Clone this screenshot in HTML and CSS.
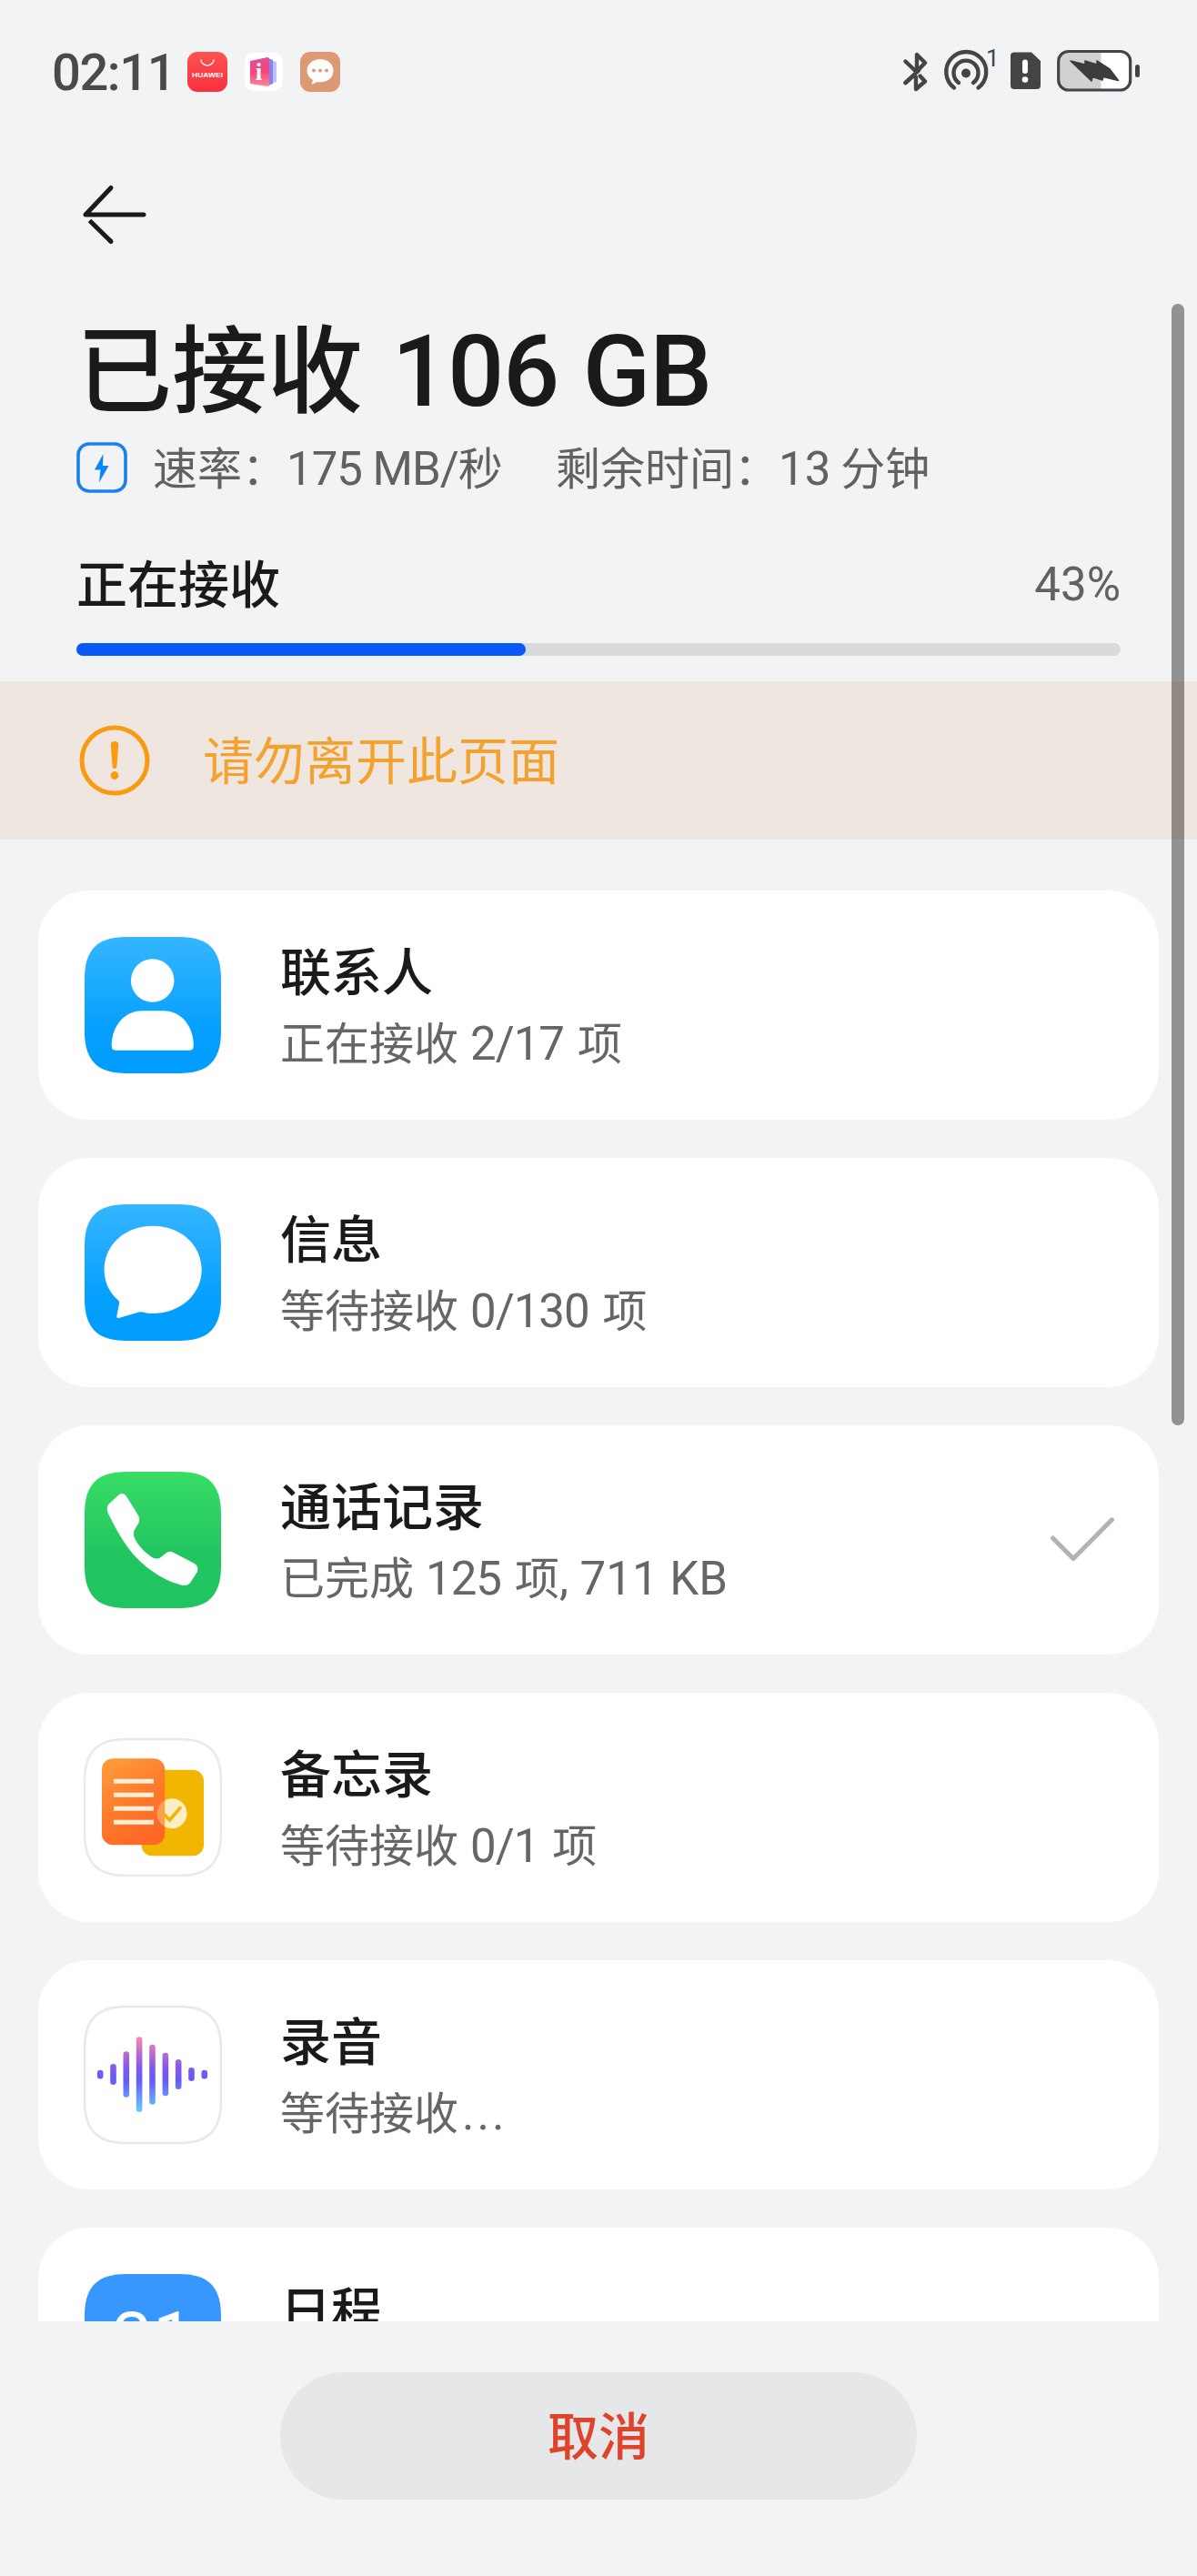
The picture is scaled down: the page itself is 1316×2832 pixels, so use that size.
FILE: index.html
```html
<!DOCTYPE html>
<html lang="zh-CN">
<head>
<meta charset="utf-8">
<title>已接收 106 GB</title>
<link rel="stylesheet" href="styles.css">
</head>
<body>
<svg class="defs" width="0" height="0" aria-hidden="true">
  <defs>
    <linearGradient id="blue" x1="0" y1="0" x2="0" y2="1"><stop offset="0" stop-color="#35b6ff"/><stop offset=".7" stop-color="#049fff"/><stop offset="1" stop-color="#009cff"/></linearGradient>
    <linearGradient id="green" x1="0" y1="0" x2="0" y2="1"><stop offset="0" stop-color="#38dc66"/><stop offset=".6" stop-color="#22c661"/><stop offset="1" stop-color="#20c460"/></linearGradient>
    <linearGradient id="orange" x1="0" y1="0" x2=".5" y2="1"><stop offset="0" stop-color="#ff9e3c"/><stop offset=".6" stop-color="#ff7a2c"/><stop offset="1" stop-color="#ff6826"/></linearGradient>
    <linearGradient id="wave" gradientUnits="userSpaceOnUse" x1="0" y1="33" x2="0" y2="116"><stop offset="0" stop-color="#f88aa8"/><stop offset=".4" stop-color="#8458ec"/><stop offset=".58" stop-color="#6659f8"/><stop offset="1" stop-color="#68cdfb"/></linearGradient>
    <linearGradient id="pink" x1="0" y1="0" x2="0" y2="1"><stop offset="0" stop-color="#e2509a"/><stop offset=".5" stop-color="#f8447c"/><stop offset="1" stop-color="#fb8a98"/></linearGradient>
    <linearGradient id="red" x1="0" y1="0" x2="0" y2="1"><stop offset="0" stop-color="#ff5250"/><stop offset="1" stop-color="#f9303e"/></linearGradient>
    <path id="tile" d="M46 0H104C136 0 150 14 150 46V104C150 136 136 150 104 150H46C14 150 0 136 0 104V46C0 14 14 0 46 0Z"/>
  </defs>
</svg>
<div class="screen">
  <header class="status">
    <span class="clock">02:11</span>
    <div class="notices">
      <svg width="44" height="44" viewBox="0 0 44 44"><rect width="44" height="44" rx="11" fill="url(#red)"/><path d="M15 8.5a7 6.5 0 0 0 14 0" fill="none" stroke="#fff" stroke-width="1.4"/><text x="22" y="28" text-anchor="middle" textLength="34" lengthAdjust="spacingAndGlyphs" class="brand">HUAWEI</text></svg>
      <svg width="42" height="42" viewBox="0 0 42 42"><rect width="42" height="42" rx="10" fill="#fff"/><path d="M26 7l9 3v22l-9 3z" fill="#c3bff8"/><path d="M26 6l5 2v26l-5 2z" fill="#8a80ee"/><path d="M6 9L25 5q2 0 2 2v28q0 2-2 2L6 34z" fill="url(#pink)"/><text x="15.5" y="30" text-anchor="middle" class="info">i</text></svg>
      <svg width="44" height="44" viewBox="0 0 44 44"><rect width="44" height="44" rx="11" fill="#dc9a74"/><path d="M22 8C14 8 7.500 13.500 7.500 20.500C7.500 25 10 28.500 14 31L12.500 36L19 33C30 34.500 36.500 28.500 36.500 20.500C36.500 13.500 30 8 22 8Z" fill="#fff"/><g fill="#dc9a74"><circle cx="15" cy="20.500" r="2"/><circle cx="22" cy="20.500" r="2"/><circle cx="29" cy="20.500" r="2"/></g></svg>
    </div>
    <svg class="signals" width="264" height="58" viewBox="992 48 264 58">
      <g fill="none" stroke="#444" stroke-width="4.400" stroke-linecap="round" stroke-linejoin="round">
        <path d="M995.500 67.500L1007.500 79L1017 69L1008 60V77M995.500 91L1005.500 82"/>
        <path d="M995.500 91L1010 77.500"/>
        <path d="M1007 85V98L1017 89.500L1011.500 83.500"/>
        <path d="M1049 96.500A22 22 0 1 1 1075.500 96.500"/>
        <path d="M1054 91A13.500 13.500 0 1 1 1070 91"/>
      </g>
      <circle cx="1062" cy="80.500" r="5" fill="#444"/>
      <text x="1084" y="72.500" class="count">1</text>
      <path d="M1115 57.500H1134L1144 67V94Q1144 98 1140 98H1115Q1111 98 1111 94V61.500Q1111 57.500 1115 57.500Z" fill="#444"/>
      <path d="M1127 68.500V78" stroke="#fff" stroke-width="6" stroke-linecap="round"/><circle cx="1127" cy="87.500" r="3.300" fill="#fff"/>
      <rect x="1163.500" y="56.500" width="79.500" height="43" rx="11" fill="#fff"/>
      <path d="M1210.500 57H1175Q1164 57 1164 68V88Q1164 99 1175 99H1210.500Z" fill="#d0d1d2"/>
      <rect x="1163.700" y="56.500" width="79" height="42.500" rx="11" fill="none" stroke="#444" stroke-width="3.200"/>
      <path d="M1177 67L1193 71V67L1206 71V67L1220 76L1229.500 88.500L1213 84.500L1212 88L1201 84.500L1200 89Z" fill="#3a3d3b" stroke="#3a3d3b" stroke-width="1.500" stroke-linejoin="round"/>
      <rect x="1248" y="71" width="5" height="14" rx="2.500" fill="#444"/>
    </svg>
  </header>

  <section class="summary">
    <svg class="back" width="72" height="68" viewBox="90 202 72 68" fill="none" stroke="#191a1b" stroke-width="5" stroke-linecap="round" stroke-linejoin="round"><path d="M158 236H94L122 206.500"/><path d="M98.500 242.500L122 265.500" stroke-linecap="butt"/><path d="M121 264.500L122 265.500"/></svg>
    <h1>已接收<span class="total">106 GB</span></h1>
    <div class="rate">
      <svg width="56" height="56" viewBox="0 0 56 56"><rect x="2" y="2" width="52" height="52" rx="12" fill="none" stroke="#1b80e8" stroke-width="3.600"/><path d="M29.500 13L20 30.500H26.500L25 44.500L35.500 26H29Z" fill="#0a84ff"/></svg>
      <span class="speed">速率：<span class="num tight">175 MB/</span>秒</span>
      <span class="left">剩余时间：<span class="num">13</span> 分钟</span>
    </div>
    <div class="state"><span class="phase">正在接收</span><span class="pct num">43%</span></div>
    <div class="bar"><div class="fill" style="width:43%"></div></div>
  </section>

  <div class="warning">
    <svg width="78" height="78" viewBox="0 0 78 78"><circle cx="39" cy="39" r="36" fill="none" stroke="#fa9a10" stroke-width="5"/><path d="M34.800 22Q34.800 18 39 18T43.200 22L41.500 45Q41.300 48 39 48T36.500 45Z" fill="#fa9a10"/><circle cx="39" cy="55.500" r="4.400" fill="#fa9a10"/></svg>
    <span class="notice">请勿离开此页面</span>
  </div>

  <main class="list">
    <article class="card">
      <svg class="icon" viewBox="0 0 150 150"><use href="#tile" fill="url(#blue)"/><circle cx="74.700" cy="48" r="23.800" fill="#fff"/><path d="M34 124.700H115.500Q119.800 124.700 119.800 119.500C119.800 98 106 81.300 87 81.300H63C44 81.300 29.700 98 29.700 119.500Q29.700 124.700 34 124.700Z" fill="#fff"/></svg>
      <div class="info-col"><h2>联系人</h2><p>正在接收<span class="num gap">2/17</span>项</p></div>
    </article>
    <article class="card">
      <svg class="icon" viewBox="0 0 150 150"><use href="#tile" fill="url(#blue)"/><path d="M75 23.700C45 23.700 21.600 44 21.600 72C21.600 86 28 98 37 105.500Q38.500 107 38 109.500L35.300 123Q35 125.500 37.500 125L60 118.500Q62 118 64 118.500Q69 120 75 120C105 120 128.700 99 128.700 72C128.700 44 105 23.700 75 23.700Z" fill="#fff"/></svg>
      <div class="info-col"><h2>信息</h2><p>等待接收<span class="num gap">0/130</span>项</p></div>
    </article>
    <article class="card">
      <svg class="icon" viewBox="0 0 150 150"><use href="#tile" fill="url(#green)"/><path d="M38 25Q43 22.500 46 27L59 48Q61.500 53 58.500 58L54.500 64.500Q53 68 54.500 72Q60 84 72 92.500Q77 97 82.500 95L90 89Q94.500 86.500 99 89.500L121 101Q126 104.500 124 110L116.500 121.500Q113 126.500 106 124.500C85 119 64 104 50.500 87C42 76 36 66 26.500 47Q23 40 26.500 35.500Z" fill="#fff"/></svg>
      <div class="info-col"><h2>通话记录</h2><p>已完成<span class="num gap">125</span>项<span class="num">, 711 KB</span></p></div>
      <svg class="done" width="72" height="50" viewBox="1154 1669 72 50" fill="none" stroke="#b3b3b3" stroke-width="5" stroke-linecap="round" stroke-linejoin="round"><path d="M1157.500 1692L1180 1714.500L1222.500 1671.800"/></svg>
    </article>
    <article class="card">
      <svg class="icon" viewBox="0 0 150 150"><use href="#tile" fill="#fff" stroke="#e9eaeb" stroke-width="2.500"/><rect x="62.500" y="33.700" width="68.500" height="94.600" rx="12" fill="#f2b600"/><rect x="19" y="21.300" width="69.200" height="95" rx="12" fill="url(#orange)"/><path d="M88.200 67.200a16.500 16.500 0 0 0 0 29z" fill="#ff9c58"/><path d="M88.200 67.200a16.500 16.500 0 1 1 0 29z" fill="#fceec4"/><path d="M88 83L93.500 89L105 75.500" fill="none" stroke="#f2b600" stroke-width="3.500" stroke-linecap="round"/><path d="M32 46.300H76M32 61.300H76M32 76.300H76M32 91.300H76" stroke="#ffedd4" stroke-width="5"/></svg>
      <div class="info-col"><h2>备忘录</h2><p>等待接收<span class="num gap">0/1</span>项</p></div>
    </article>
    <article class="card">
      <svg class="icon" viewBox="0 0 150 150"><use href="#tile" fill="#fff" stroke="#e6e9eb" stroke-width="2.500"/><g fill="url(#wave)"><rect x="13.900" y="69.700" width="6.600" height="9.800" rx="3.300"/><rect x="28.200" y="63" width="6.600" height="23" rx="3.300"/><rect x="42.500" y="49.300" width="6.600" height="50.400" rx="3.300"/><rect x="56.800" y="33.300" width="6.600" height="82.700" rx="3.300"/><rect x="71.200" y="41.700" width="6.600" height="66" rx="3.300"/><rect x="85.600" y="50.700" width="6.600" height="47.600" rx="3.300"/><rect x="99.900" y="58" width="6.600" height="33" rx="3.300"/><rect x="114.200" y="67" width="6.600" height="15" rx="3.300"/><rect x="128.500" y="69.700" width="6.600" height="9.800" rx="3.300"/></g></svg>
      <div class="info-col"><h2>录音</h2><p>等待接收<span class="num dots">...</span></p></div>
    </article>
    <article class="card">
      <svg class="icon" viewBox="0 0 150 150"><use href="#tile" fill="#3896ff"/><text x="75" y="98" text-anchor="middle" class="day">31</text></svg>
      <div class="info-col"><h2>日程</h2><p>等待接收</p></div>
    </article>
  </main>

  <footer class="actions"><button class="cancel" type="button">取消</button></footer>
  <div class="scrollbar"></div>
</div>
</body>
</html>
```
FILE: styles.css
```css
* { box-sizing: border-box; }
body, h1, h2, p { margin: 0; }
body {
  background: #f1f3f5;
  color: #191a1b;
  font-family: "Noto Sans CJK SC", Roboto, sans-serif;
}
svg { display: block; flex: none; }
.defs { position: absolute; }
.screen {
  position: relative;
  width: 1316px;
  height: 2832px;
  display: flex;
  flex-direction: column;
  overflow: hidden;
}
.num { font-family: Roboto, sans-serif; font-size: 1.04em; }

.status {
  height: 158px;
  padding: 0 60px 0 57px;
  display: flex;
  align-items: center;
}
.clock {
  width: 149px;
  padding-top: 2px;
  font: 500 56px/60px Roboto, sans-serif;
  letter-spacing: -1.400px;
  color: #4a4a4a;
}
.notices { display: flex; align-items: center; gap: 19px; }
.signals { margin: 0 0 4px auto; }
.brand { font: 700 8px "Liberation Sans", sans-serif; fill: #fff; }
.info { font: 700 27px "Liberation Serif", serif; fill: #fff; }
.count { font: 400 26px Roboto, sans-serif; fill: #444; }

.summary { height: 591px; padding: 44px 84px 0; }
.back { margin-left: 6px; }
h1 {
  margin-top: 61px;
  height: 136px;
  display: flex;
  align-items: center;
  gap: 32px;
  font-size: 105px;
  line-height: 136px;
  font-weight: 500;
}
.total {
  padding-top: 20px;
  font-family: Roboto, sans-serif;
  font-size: 109px;
  letter-spacing: -.8px;
}
.rate {
  margin-top: 19px;
  height: 56px;
  display: flex;
  align-items: center;
  font-size: 49px;
  line-height: 56px;
  color: #606163;
  white-space: nowrap;
}
.speed { margin-left: 28px; width: 443px; }
.tight { letter-spacing: -1px; }
.state {
  margin-top: 58px;
  height: 80px;
  display: flex;
  justify-content: space-between;
  align-items: center;
  font-size: 56px;
  font-weight: 500;
}
.phase { padding-bottom: 4px; }
.pct { padding-top: 5px; font-size: 51px; font-weight: 400; color: #606163; }
.bar { margin-top: 27px; height: 14px; border-radius: 7px; background: #d9dadc; }
.fill { height: 14px; border-radius: 7px; background: #0a59f7; }

.warning {
  height: 174px;
  padding-left: 87px;
  display: flex;
  align-items: center;
  gap: 58px;
  background: #f0e6e0;
  color: #f3a22f;
  font-size: 56px;
}
.notice { padding-bottom: 8px; }

.list {
  height: 1629px;
  padding: 56px 42px 0;
  display: flex;
  flex-direction: column;
  gap: 42px;
  overflow: hidden;
}
.card {
  flex: none;
  height: 252px;
  padding: 0 48px 0 51px;
  display: flex;
  align-items: center;
  border-radius: 56px;
  background: #fff;
}
.icon { width: 150px; height: 150px; overflow: visible; }
.info-col { margin-left: 65px; padding-top: 1px; }
h2 { font-size: 56px; line-height: 80px; font-weight: 500; }
p { font-size: 49px; line-height: 77px; color: #666; white-space: nowrap; }
.gap { margin: 0 15px 0 13px; letter-spacing: -1px; }
.dots { margin-left: 4px; letter-spacing: 3px; }
.done { margin-left: auto; }
.day { font: 400 80px Roboto, sans-serif; fill: #fff; }

.actions { padding-top: 56px; display: flex; justify-content: center; }
.cancel {
  width: 700px;
  height: 140px;
  padding: 0 0 7px;
  border: 0;
  border-radius: 70px;
  background: #e6e7e8;
  color: #e0432b;
  font: 500 56px "Noto Sans CJK SC", sans-serif;
}
.scrollbar {
  position: absolute;
  top: 334px;
  right: 14px;
  width: 14px;
  height: 1233px;
  border-radius: 7px;
  background: rgba(0, 0, 0, .4);
}
```
